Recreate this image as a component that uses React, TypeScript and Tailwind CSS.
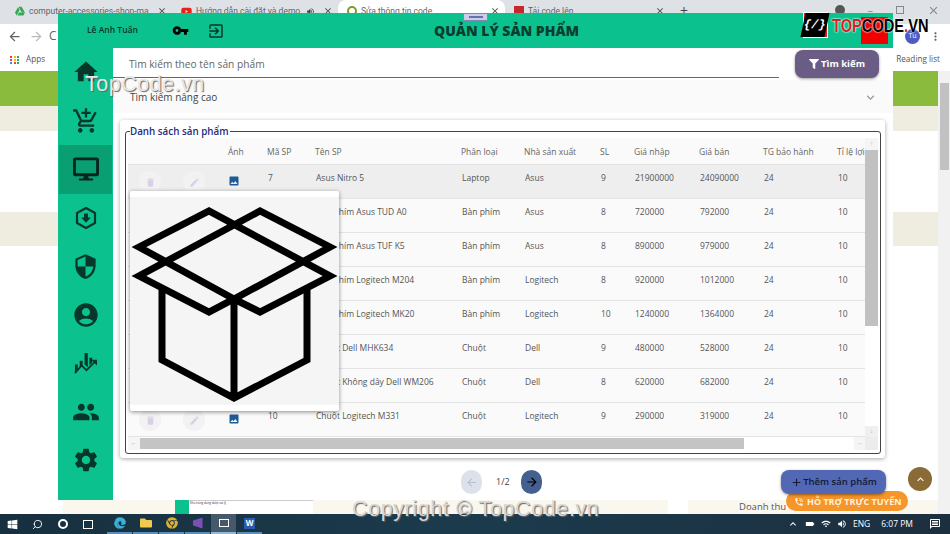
import React from "react";
import {
  MdHome, MdOutlineAddShoppingCart, MdSecurity, MdAccountCircle, MdPeople, MdSettings,
  MdVpnKey, MdOutlineExitToApp, MdDelete, MdEdit, MdImage, MdExpandMore, MdArrowBack, MdArrowForward,
  MdAdd, MdKeyboardArrowUp, MdMoreVert, MdClose, MdOutlineMessage, MdWifi, MdVolumeUp, MdBatteryStd, MdPhoneInTalk,
} from "react-icons/md";
import { FaDesktop, FaFilter, FaWindows, FaChrome, FaEdge, FaFolder, FaGoogleDrive, FaYoutube } from "react-icons/fa";
import { FiSearch } from "react-icons/fi";

const rows = [
  ["7", "Asus Nitro 5", "Laptop", "Asus", "9", "21900000", "24090000"],
  ["8", "Bàn phím Asus TUD A0", "Bàn phím", "Asus", "8", "720000", "792000"],
  ["9", "Bàn phím Asus TUF K5", "Bàn phím", "Asus", "8", "890000", "979000"],
  ["11", "Bàn phím Logitech M204", "Bàn phím", "Logitech", "8", "920000", "1012000"],
  ["12", "Bàn phím Logitech MK20", "Bàn phím", "Logitech", "10", "1240000", "1364000"],
  ["13", "Chuột Dell MHK634", "Chuột", "Dell", "9", "480000", "528000"],
  ["14", "Chuột Không dây Dell WM206", "Chuột", "Dell", "8", "620000", "682000"],
  ["10", "Chuột Logitech M331", "Chuột", "Logitech", "9", "290000", "319000"],
];

const gridCols = "grid grid-cols-[55px_45px_39px_48px_146px_63px_76px_34px_65px_64px_74px_60px]";

function HexDown() {
  return (
    <svg viewBox="0 0 24 24" className="w-[24px] h-[26px]" fill="none">
      <path d="M12 2 L21 7 V17 L12 22 L3 17 V7 Z" stroke="#07372b" strokeWidth="2.2" strokeLinejoin="round" />
      <path d="M10 7.5h4v4h2.8L12 16.8 7.2 11.5H10z" fill="#07372b" />
    </svg>
  );
}

function ChartIcon() {
  return (
    <svg viewBox="0 0 26 24" className="w-[25px] h-[23px]" fill="#07372b">
      <path d="M2 13h3v6l-3 3zM7 9h3v5l-3 3zM12 1h3.4v15l-3.4-3zM17 6h3v5l-3 3z" />
      <path d="M2 22l7-8 5 5 9-9" fill="none" stroke="#07372b" strokeWidth="1.8" />
      <path d="M19 8h6v6z" />
    </svg>
  );
}

function BoxIcon() {
  return (
    <svg viewBox="130 197 209 208" className="w-[209px] h-[208px]" fill="none" stroke="#000" strokeWidth="7" strokeLinejoin="miter">
      <path d="M139 247 L209 211 L330 276 L260 312 L234 299 L209 312 L139 276 L260 211 L330 247 L234 299 L139 247 Z" />
      <path d="M162 290 V360 L234 398 L307 360 V290 M234 299 V398" />
    </svg>
  );
}

function BrowserTab({ icon, text, w, active, children }: { icon: React.ReactNode; text: string; w: string; active?: boolean; children?: React.ReactNode }) {
  return (
    <div className={`${w} h-[24px] flex items-center gap-[4px] pl-[9px] pr-[5px] pb-[2px] text-[8.5px] font-['Roboto',sans-serif] text-[#5f6368] ${active ? "bg-white rounded-t-[8px]" : ""}`}>
      {icon}
      <span className="flex-1 min-w-0 overflow-hidden whitespace-nowrap">{text}</span>
      {children}
      <MdClose className="w-[10px] h-[10px] text-[#444] ml-[4px] shrink-0" />
    </div>
  );
}

function SideItem({ children, active }: { children: React.ReactNode; active?: boolean }) {
  return (
    <div className={`h-[48.5px] mx-[1px] flex items-center justify-center text-[#07372b] ${active ? "bg-[#0a9e73]" : ""}`}>
      {children}
    </div>
  );
}

function ActionDot({ children }: { children: React.ReactNode }) {
  return (
    <div className="w-[22px] h-[22px] -mt-[1px] rounded-full bg-[#f2f2f2] flex items-center justify-center text-[#d9cfe8]">
      {children}
    </div>
  );
}

function TaskIcon({ children, active }: { children: React.ReactNode; active?: boolean }) {
  return (
    <div className={`w-[25px] h-full flex items-center justify-center border-b-2 ${active ? "bg-[#45596a] border-[#8fb8dc]" : "border-[#5a8fbd]"}`}>
      {children}
    </div>
  );
}

export default function App() {
  return (
    <div className="relative w-[950px] h-[534px] overflow-hidden bg-white font-['Open_Sans','Noto_Sans',sans-serif] flex flex-col">
      {/* Browser tab strip */}
      <div className="h-[24px] bg-[#dee1e6] flex items-center pl-[6px]">
        <BrowserTab w="w-[166px]" text="computer-accessories-shop-mar" icon={<FaGoogleDrive className="w-[10px] h-[10px] text-[#34a853] shrink-0" />} />
        <BrowserTab w="w-[166px]" text="Hướng dẫn cài đặt và demo" icon={<FaYoutube className="w-[11px] h-[11px] text-[#e62117] shrink-0" />}>
          <MdVolumeUp className="w-[9px] h-[9px] text-[#444] shrink-0" />
        </BrowserTab>
        <BrowserTab w="w-[167px]" active text="Sửa thông tin code" icon={<div className="w-[10px] h-[10px] rounded-full border-2 border-[#7a9a2a] shrink-0" />} />
        <BrowserTab w="w-[165px]" text="Tải code lên" icon={<div className="w-[10px] h-[10px] bg-[#c9252d] shrink-0" />} />
        <span className="ml-[10px] mb-[3px] text-[14px] text-[#444] leading-none">+</span>
        <div className="ml-auto flex items-center gap-[23px] pr-[10px] pb-[4px] text-[#888]">
          <div className="w-[10px] h-[10px] rounded-full bg-[#555]" />
          <span className="text-[11px]">–</span>
          <span className="w-[8px] h-[8px] border border-[#888]" />
          <MdClose className="w-[13px] h-[13px]" />
        </div>
      </div>
      {/* Browser toolbar */}
      <div className="h-[24px] flex items-center pl-[7px] pr-[8px] bg-white text-[#5f6368]">
        <MdArrowBack className="w-[15px] h-[15px]" />
        <MdArrowForward className="w-[15px] h-[15px] ml-[7px] text-[#bbb]" />
        <span className="ml-[5px] text-[12px]">C</span>
        <div className="ml-auto w-[15px] h-[15px] rounded-full bg-[#4d5bc4] text-white text-[7px] flex items-center justify-center">Tu</div>
        <MdMoreVert className="w-[13px] h-[13px] ml-[9px]" />
      </div>
      {/* Bookmarks */}
      <div className="h-[23px] flex items-center pl-[10px] pr-[10px] text-[8.2px] text-[#555] bg-white">
        <div className="grid grid-cols-3 gap-[1px] w-[10px]">
          {["#ea4335", "#fbbc05", "#34a853", "#ea4335", "#fbbc05", "#34a853", "#4285f4", "#ea4335", "#34a853"].map((c, i) => (
            <span key={i} className="w-[2px] h-[2px]" style={{ backgroundColor: c }} />
          ))}
        </div>
        <span className="ml-[6px]">Apps</span>
        <span className="ml-auto">Reading list</span>
      </div>
      {/* Page behind */}
      <div className="flex-1 flex min-h-0">
        <div className="flex-1 flex flex-col">
          <div className="h-[35px] bg-[#8abb3c]" />
          <div className="h-[25px] bg-[#efece0]" />
          <div className="h-[81px] bg-white" />
          <div className="h-[34px] bg-[#efece0]" />
          <div className="flex-1 bg-white" />
          <div className="h-[14px] flex">
            <div className="w-[63px] bg-white" />
            <div className="w-[112px] bg-[#faf7ee]" />
            <div className="w-[14px] bg-[#0bc28e]" />
            <div className="w-[124px] bg-white border-t border-[#ccc] text-[3px] text-[#333] px-[1px]">Khả năng đang được xử lý</div>
            <div className="w-[355px] bg-[#faf7ee]" />
            <div className="w-[20px] bg-white" />
            <div className="flex-1 bg-[#faf7ee] flex items-center pl-[51px]">
              <span className="text-[9.5px] text-[#555] whitespace-nowrap">Doanh thu</span>
            </div>
          </div>
        </div>
        <div className="w-[12px] bg-[#f1f1f1] relative flex justify-center pt-[12px]">
          <div className="w-[9px] h-[87px] bg-[#c1c1c1]" />
        </div>
      </div>
      {/* Taskbar */}
      <div className="h-[20px] bg-gradient-to-r from-[#17303f] via-[#1b3b4d] to-[#1c2f3f] flex items-center text-white relative z-[4]">
        <div className="w-[25px] flex justify-center"><FaWindows className="w-[11px] h-[11px]" /></div>
        <div className="w-[25px] flex justify-center"><FiSearch className="w-[11px] h-[11px] -scale-x-100" /></div>
        <div className="w-[25px] flex justify-center"><div className="w-[10px] h-[10px] rounded-full border-2 border-white" /></div>
        <div className="w-[25px] flex justify-center"><div className="w-[10px] h-[9px] border border-white" /></div>
        <div className="flex h-full ml-[7px] gap-[1px]">
          <TaskIcon><FaEdge className="w-[12px] h-[12px] text-[#3bb0d8]" /></TaskIcon>
          <TaskIcon><FaFolder className="w-[12px] h-[12px] text-[#f2c94c]" /></TaskIcon>
          <TaskIcon><FaChrome className="w-[12px] h-[12px] text-[#e0b030]" /></TaskIcon>
          <TaskIcon><div className="w-[10px] h-[11px] bg-[#7b4fb5] [clip-path:polygon(0_30%,100%_0,100%_100%,0_70%)]" /></TaskIcon>
          <TaskIcon active><div className="w-[10px] h-[8px] border border-white" /></TaskIcon>
          <TaskIcon><div className="w-[11px] h-[11px] bg-[#2b5cab] text-[8px] font-bold flex items-center justify-center leading-none">W</div></TaskIcon>
        </div>
        <div className="ml-auto flex items-center gap-[6px] pr-[9px] text-[8.5px]">
          <MdKeyboardArrowUp className="w-[12px] h-[12px]" />
          <MdBatteryStd className="w-[10px] h-[10px] rotate-90" />
          <MdWifi className="w-[10px] h-[10px]" />
          <MdVolumeUp className="w-[10px] h-[10px]" />
          <span>ENG</span>
          <span className="ml-[5px]">6:07 PM</span>
          <MdOutlineMessage className="w-[12px] h-[12px] ml-[10px]" />
        </div>
      </div>

      {/* App window */}
      <div className="absolute left-[58px] top-[13px] w-[835px] h-[487px] flex flex-col z-[5]">
        <div className="h-[35px] bg-[#0bc28e] flex items-center relative">
          <span className="ml-[29px] w-[85px] text-[8.5px] font-semibold text-[#07372b]">Lê Anh Tuấn</span>
          <MdVpnKey className="w-[17px] h-[17px] text-black" />
          <MdOutlineExitToApp className="ml-[18px] w-[18px] h-[18px] text-[#07372b]" />
          <span className="absolute left-[376px] text-[14px] font-extrabold text-[#0a3d30] whitespace-nowrap">QUẢN LÝ SẢN PHẨM</span>
          <div className="absolute left-[405px] top-0 w-[25px] h-[8px] bg-[#c9cde8] border border-[#7f86b8] flex items-center justify-center">
            <div className="w-[14px] h-[2px] bg-[#6a70a8]" />
          </div>
          <div className="absolute left-[803px] top-[4px] w-[27px] h-[27px] bg-[#f00000]" />
        </div>
        <div className="flex-1 flex min-h-0">
          <div className="w-[55px] bg-[#0bc28e] flex flex-col">
            <SideItem><MdHome className="w-[28px] h-[28px]" /></SideItem>
            <SideItem><MdOutlineAddShoppingCart className="w-[28px] h-[28px]" /></SideItem>
            <SideItem active><FaDesktop className="w-[26px] h-[26px] text-[#06261e]" /></SideItem>
            <SideItem><HexDown /></SideItem>
            <SideItem><MdSecurity className="w-[27px] h-[27px]" /></SideItem>
            <SideItem><MdAccountCircle className="w-[28px] h-[28px]" /></SideItem>
            <SideItem><ChartIcon /></SideItem>
            <SideItem><MdPeople className="w-[28px] h-[28px]" /></SideItem>
            <SideItem><MdSettings className="w-[28px] h-[28px]" /></SideItem>
          </div>
          <div className="flex-1 bg-white flex flex-col min-w-0">
            {/* Search */}
            <div className="h-[32px] flex relative">
              <div className="w-[666px] h-[30px] border-b border-[#666] pl-[16px] flex items-center text-[10.2px] text-[#666] pt-[4px]">Tìm kiếm theo tên sản phẩm</div>
              <div className="absolute left-[682px] top-[2px] w-[84px] h-[28px] rounded-[8px] bg-[#6b5c85] shadow-[0_1px_3px_rgba(0,0,0,0.4)] text-white text-[9.5px] font-bold flex items-center justify-center gap-[2px]">
                <FaFilter className="w-[10px] h-[10px]" />Tìm kiếm
              </div>
            </div>
            <div className="h-[33px] bg-[#fafafa] flex items-center pl-[17px] pr-[15px] pt-[2px] text-[10px] text-[#444]">
              <span className="flex-1">Tìm kiếm nâng cao</span>
              <MdExpandMore className="w-[15px] h-[15px] text-[#999]" />
            </div>
            {/* Card */}
            <div className="ml-[7px] mt-[7px] w-[765px] h-[338px] bg-white rounded-[3px] shadow-[0_1px_4px_rgba(0,0,0,0.35)] pl-[5px] pr-[4px] pb-[4px] pt-[5px] flex flex-col">
              <fieldset className="flex-1 min-h-0 min-w-0 border border-[#444] rounded-[3px] px-[2px] pb-[1px] flex flex-col">
                <legend className="text-[9.8px] font-semibold text-[#1f2a80] leading-[13px] pr-[1px] ml-[2px]">Danh sách sản phẩm</legend>
                <div className="flex-1 min-h-0 flex flex-col">
                  <div className="flex-1 min-h-0 flex">
                    <div className="flex-1 min-w-0 overflow-hidden">
                      <div className={`${gridCols} w-[800px] h-[27px] pt-[3px] items-center bg-[#fafafa] border-b border-[#e0e0e0] text-[8.5px] text-[#666]`}>
                        <span /><span />
                        <span>Ảnh</span><span>Mã SP</span><span>Tên SP</span><span>Phân loại</span><span>Nhà sản xuất</span><span>SL</span><span>Giá nhập</span><span>Giá bán</span><span>TG bảo hành</span><span className="whitespace-nowrap">Tỉ lệ lợi nhuận</span>
                      </div>
                      {rows.map((r, i) => (
                        <div key={i} className={`${gridCols} w-[800px] h-[34px] pt-[7px] border-b border-[#e4e4e4] text-[8.5px] text-[#555] ${i === 0 ? "bg-[#eeeeee]" : "bg-[#fafafa]"}`}>
                          <div className="pl-[11px]"><ActionDot><MdDelete className="w-[11px] h-[11px]" /></ActionDot></div>
                          <div><ActionDot><MdEdit className="w-[11px] h-[11px]" /></ActionDot></div>
                          <div className="pt-[3px] text-[#1f5a96]"><MdImage className="w-[12px] h-[12px]" /></div>
                          <span className="pl-[1px]">{r[0]}</span>
                          <span className="pl-[1px]">{r[1]}</span>
                          <span className="pl-[1px]">{r[2]}</span>
                          <span className="pl-[1px]">{r[3]}</span>
                          <span className="pl-[1px]">{r[4]}</span>
                          <span className="pl-[1px]">{r[5]}</span>
                          <span className="pl-[1px]">{r[6]}</span>
                          <span className="pl-[1px]">24</span>
                          <span className="pl-[1px]">10</span>
                        </div>
                      ))}
                    </div>
                    <div className="w-[13px] flex flex-col bg-white shrink-0">
                      <div className="h-[12px] bg-[#f5f5f5] text-[#bbb] flex items-center justify-center text-[7px]">↑</div>
                      <div className="h-[176px] bg-[#c1c1c1]" />
                      <div className="flex-1 flex items-end">
                        <div className="w-full h-[11px] bg-[#f0f0f0] text-[#bbb] flex items-center justify-center text-[7px]">↓</div>
                      </div>
                    </div>
                  </div>
                  <div className="h-[13px] flex items-center bg-white shrink-0">
                    <div className="w-[12px] h-full bg-[#f5f5f5] text-[#bbb] flex items-center justify-center text-[7px]">←</div>
                    <div className="w-[604px] h-[11px] bg-[#c4c4c4]" />
                    <div className="ml-auto w-[11px] h-full bg-[#f5f5f5] text-[#bbb] flex items-center justify-center text-[7px]">→</div>
                    <div className="w-[13px] h-full bg-[#ececec]" />
                  </div>
                </div>
              </fieldset>
            </div>
            {/* Pagination */}
            <div className="flex-1 flex items-center pl-[348px] pt-[6px]">
              <div className="w-[21px] h-[24px] rounded-full bg-[#dde1ea] text-[#b8c0d0] flex items-center justify-center">
                <MdArrowBack className="w-[13px] h-[13px]" />
              </div>
              <span className="ml-[14px] w-[25px] text-[9px] text-[#444]">1/2</span>
              <div className="w-[21px] h-[24px] rounded-full bg-[#44608f] text-black flex items-center justify-center">
                <MdArrowForward className="w-[14px] h-[14px]" />
              </div>
            </div>
          </div>
        </div>
      </div>

      {/* Floating support pill, add button and back-to-top */}
      <div className="absolute left-[786px] top-[491px] w-[122px] h-[20px] rounded-full bg-[#f5952a] text-[#fff2dc] text-[9px] font-bold flex items-center gap-[3px] pl-[8px] pt-[1px] z-[6] whitespace-nowrap">
        <MdPhoneInTalk className="w-[10px] h-[10px] shrink-0" />HỖ TRỢ TRỰC TUYẾN
      </div>
      <div className="absolute left-[781px] top-[470px] w-[105px] h-[24px] rounded-[8px] bg-[#5268b5] shadow-[0_1px_3px_rgba(0,0,0,0.4)] text-[#111a3a] text-[9.5px] font-semibold flex items-center justify-center z-[7]">
        <MdAdd className="w-[13px] h-[13px]" />Thêm sản phẩm
      </div>
      <div className="absolute left-[908px] top-[467px] w-[24px] h-[24px] rounded-full bg-[#8a6a35] text-white flex items-center justify-center z-[7]">
        <MdKeyboardArrowUp className="w-[13px] h-[13px]" />
      </div>

      {/* Image preview popover */}
      <div className="absolute left-[130px] top-[191px] w-[209px] h-[220px] bg-white rounded-[2px] shadow-[0_1px_4px_rgba(0,0,0,0.45)] z-10 pt-[6px]">
        <div className="h-[208px] bg-[#f5f5f5]"><BoxIcon /></div>
      </div>

      {/* Logo + watermarks */}
      <div className="absolute left-[803px] top-[12px] z-10 flex items-center">
        <div className="w-[25px] h-[26px] bg-[#d61f26] border border-white flex items-center justify-end text-white text-[12px] font-bold font-['Liberation_Mono',monospace]">
          <span className="bg-black px-[1px] -skew-x-12 leading-[24px]">{"{/}"}</span>
        </div>
        <span className="ml-[4px] w-[94px] text-[19px] leading-none font-bold font-['Liberation_Sans',sans-serif] scale-x-[0.77] origin-left [text-shadow:0_0_2px_#fff,0_0_2px_#fff] whitespace-nowrap">
          <span className="text-[#d61f26]">TOP</span><span className="text-black">CODE</span><span className="text-[#d61f26]">.</span><span className="text-black">VN</span>
        </span>
      </div>
      <span className="absolute left-[85px] top-[68px] z-10 text-[21.5px] font-['Liberation_Sans',sans-serif] tracking-[0.5px] text-[#e8e8e8] [text-shadow:1px_1px_1px_#666] whitespace-nowrap">TopCode.vn</span>
      <span className="absolute left-[352px] top-[493px] z-10 text-[21.5px] font-['Liberation_Sans',sans-serif] tracking-[0.6px] text-[#d8d8d8] [text-shadow:1px_1px_1px_#666] whitespace-nowrap">Copyright © TopCode.vn</span>
    </div>
  );
}
